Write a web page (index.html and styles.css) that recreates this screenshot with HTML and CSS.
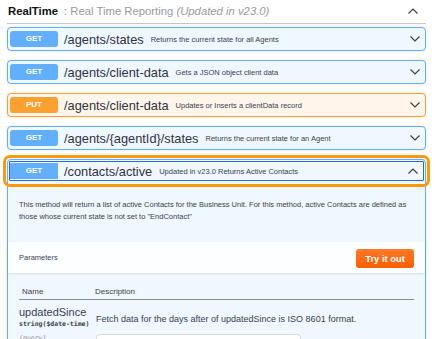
FILE: index.html
```html
<!DOCTYPE html>
<html lang="en">
<head>
<meta charset="UTF-8" />
<title>RealTime API</title>
<link rel="stylesheet" href="styles.css">
</head>
<body>

<div class="page">

  <div class="tag-header">
    <span class="tag-name">RealTime</span>
    <span class="tag-desc">: Real Time Reporting <em>(Updated in v23.0)</em></span>
    <svg class="caret" width="12" height="8" viewBox="0 0 12 8"><path d="M1.5 6.5 L6 2 L10.5 6.5" fill="none" stroke="#3b3b3b" stroke-width="1.1"/></svg>
  </div>

  <div class="opblock get">
    <div class="summary">
      <span class="method">GET</span>
      <span class="path">/agents/states</span>
      <span class="summary-desc">Returns the current state for all Agents</span>
      <svg class="caret" width="12" height="8" viewBox="0 0 12 8"><path d="M1.5 1.5 L6 6 L10.5 1.5" fill="none" stroke="#3b3b3b" stroke-width="1.1"/></svg>
    </div>
  </div>

  <div class="opblock get">
    <div class="summary">
      <span class="method">GET</span>
      <span class="path">/agents/client-data</span>
      <span class="summary-desc">Gets a JSON object client data</span>
      <svg class="caret" width="12" height="8" viewBox="0 0 12 8"><path d="M1.5 1.5 L6 6 L10.5 1.5" fill="none" stroke="#3b3b3b" stroke-width="1.1"/></svg>
    </div>
  </div>

  <div class="opblock put">
    <div class="summary">
      <span class="method">PUT</span>
      <span class="path">/agents/client-data</span>
      <span class="summary-desc">Updates or Inserts a clientData record</span>
      <svg class="caret" width="12" height="8" viewBox="0 0 12 8"><path d="M1.5 1.5 L6 6 L10.5 1.5" fill="none" stroke="#3b3b3b" stroke-width="1.1"/></svg>
    </div>
  </div>

  <div class="opblock get">
    <div class="summary">
      <span class="method">GET</span>
      <span class="path">/agents/{agentId}/states</span>
      <span class="summary-desc">Returns the current state for an Agent</span>
      <svg class="caret" width="12" height="8" viewBox="0 0 12 8"><path d="M1.5 1.5 L6 6 L10.5 1.5" fill="none" stroke="#3b3b3b" stroke-width="1.1"/></svg>
    </div>
  </div>

  <div class="opblock get open">
    <div class="summary focused">
      <span class="method">GET</span>
      <span class="path">/contacts/active</span>
      <span class="summary-desc">Updated in v23.0 Returns Active Contacts</span>
      <svg class="caret" width="12" height="8" viewBox="0 0 12 8"><path d="M1.5 6.5 L6 2 L10.5 6.5" fill="none" stroke="#3b3b3b" stroke-width="1.1"/></svg>
    </div>
    <div class="op-desc">
      This method will return a list of active Contacts for the Business Unit. For this method, active Contacts are defined as
      those whose current state is not set to "EndContact"
    </div>
    <div class="section-header">
      <span class="section-title">Parameters</span>
      <button class="try-out">Try it out</button>
    </div>
    <div class="params">
      <div class="params-head">
        <span class="col-name">Name</span>
        <span class="col-desc">Description</span>
      </div>
      <div class="param-row">
        <div class="param-name">
          <div class="pname">updatedSince</div>
          <div class="ptype">string($date-time)</div>
          <div class="pin">(query)</div>
        </div>
        <div class="param-desc">
          <div class="pdesc-text">Fetch data for the days after of updatedSince is ISO 8601 format.</div>
          <div class="pinput"></div>
        </div>
      </div>
    </div>
  </div>

</div>

</body>
</html>
```

FILE: styles.css
```css
* {
  box-sizing: border-box;
}
body, html {
  margin: 0; padding: 0;
  background: #fff;
  color: #3b4151;
  font-family: 'Liberation Sans', Arial, sans-serif;
  overflow: hidden;
}
.page {
  padding: 0 10px 0 7px;
}
.tag-header {
  display: flex;
  align-items: center;
  height: 24px;
  padding: 0 7px 1px 1px;
  border-bottom: 1px solid #c3c5ca;
  margin-bottom: 3px;
}
.tag-name {
  font-weight: bold;
  font-size: 11.3px;
  color: #111;
}
.tag-desc {
  font-size: 11.3px;
  color: #9a9a9a;
  margin-left: 6px;
  flex: 1;
}
.caret {
  flex: none;
}
.opblock {
  border: 1px solid #61affe;
  border-radius: 4px;
  margin-bottom: 9px;
  box-shadow: 0 0 3px rgba(0,0,0,0.12);
}
.opblock.get {
  background: #eff7ff;
}
.opblock.put {
  background: #fff5ea;
  border-color: #fca130;
}
.summary {
  display: flex;
  align-items: center;
  padding: 3px 4px 3px 2px;
}
.method {
  flex: none;
  width: 48px;
  height: 16px;
  line-height: 16px;
  border-radius: 3px;
  background: #61affe;
  color: #fff;
  font-weight: bold;
  font-size: 8px;
  text-align: center;
}
.put .method {
  background: #fca130;
}
.path {
  font-size: 12.8px;
  margin-left: 6px;
  color: #30343f;
}
.summary-desc {
  font-size: 7.5px;
  margin-left: 7px;
  flex: 1;
  color: #3b4151;
}
.summary.focused {
  margin: 1px;
  padding: 1px 3px 1px 0;
  border: 1px solid #2a6ad8;
  border-radius: 1px;
  outline: 3px solid #fb9a0c;
  outline-offset: 3px;
}
.summary.focused .method {
  border-radius: 0;
}
.summary.focused .caret {
  margin-right: 1px;
}
.op-desc {
  font-size: 7.5px;
  line-height: 12px;
  padding: 17px 12px 19px 11px;
}
.section-header {
  display: flex;
  align-items: center;
  justify-content: space-between;
  height: 31px;
  padding: 0 11px;
  background: rgba(255,255,255,0.8);
  box-shadow: 0 1px 2px rgba(0,0,0,0.1);
}
.section-title {
  font-size: 7.5px;
}
.try-out {
  width: 58px;
  height: 19px;
  border: none;
  border-radius: 3px;
  background: linear-gradient(#ff7a26, #fb5e00);
  color: #fff;
  font-family: 'Liberation Sans', Arial, sans-serif;
  font-size: 9.4px;
  font-weight: bold;
  padding: 0;
  margin-top: 2px;
}
.params {
  padding: 14px 11px 0 11px;
}
.params-head {
  display: flex;
  font-size: 8px;
  height: 13px;
  border-bottom: 1px solid #8a8c92;
  padding-left: 3px;
}
.col-name {
  width: 73px;
}
.param-row {
  display: flex;
  padding-top: 5px;
}
.param-name {
  width: 77px;
}
.pname {
  font-size: 11px;
  line-height: 14px;
}
.ptype {
  font-family: 'DejaVu Sans Mono', monospace;
  font-size: 6.5px;
  line-height: 9px;
  margin-top: 1px;
  font-weight: bold;
  color: #3b4151;
}
.pin {
  font-family: 'DejaVu Sans Mono', monospace;
  font-size: 6.5px;
  font-style: italic;
  color: #888;
  margin-top: 5px;
}
.param-desc {
  flex: 1;
}
.pdesc-text {
  font-size: 9px;
  margin-top: 9px;
}
.pinput {
  margin-top: 10px;
  width: 205px;
  height: 20px;
  border: 1px solid #d9d9d9;
  border-radius: 4px;
  background: #fff;
}
```
